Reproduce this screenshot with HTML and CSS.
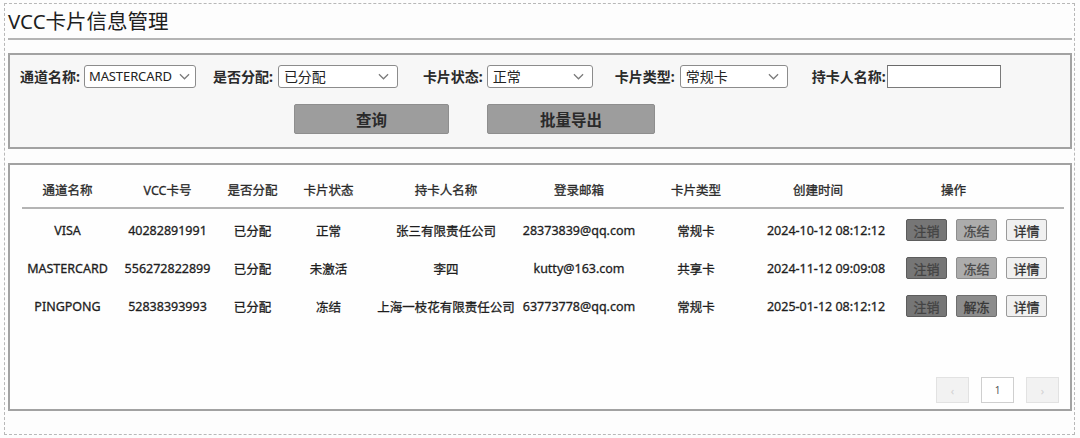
FILE: index.html
```html
<!DOCTYPE html>
<html lang="zh-CN">
<head>
<meta charset="utf-8">
<title>VCC卡片信息管理</title>
<link rel="stylesheet" href="styles.css">
</head>
<body>
<div class="page">
  <h1 class="title">VCC卡片信息管理</h1>

  <section class="search">
    <div class="filters">
      <span class="label">通道名称:</span>
      <div class="select s1"><span>MASTERCARD</span><svg class="chev" viewBox="0 0 12 7"><path d="M1 1l5 5 5-5"/></svg></div>
      <span class="label l2">是否分配:</span>
      <div class="select s2"><span>已分配</span><svg class="chev" viewBox="0 0 12 7"><path d="M1 1l5 5 5-5"/></svg></div>
      <span class="label l3">卡片状态:</span>
      <div class="select s3"><span>正常</span><svg class="chev" viewBox="0 0 12 7"><path d="M1 1l5 5 5-5"/></svg></div>
      <span class="label l4">卡片类型:</span>
      <div class="select s4"><span>常规卡</span><svg class="chev" viewBox="0 0 12 7"><path d="M1 1l5 5 5-5"/></svg></div>
      <span class="label l5">持卡人名称:</span>
      <div class="input"></div>
    </div>
    <div class="actions">
      <button class="btn btn-query">查询</button>
      <button class="btn btn-export">批量导出</button>
    </div>
  </section>

  <section class="list">
    <table class="grid">
      <colgroup>
        <col class="c1"><col class="c2"><col class="c3"><col class="c4"><col class="c5"><col class="c6"><col class="c7"><col class="c8"><col class="c9">
      </colgroup>
      <thead>
        <tr>
          <th>通道名称</th><th>VCC卡号</th><th>是否分配</th><th>卡片状态</th><th>持卡人名称</th><th>登录邮箱</th><th>卡片类型</th><th class="th-date">创建时间</th><th class="th-op">操作</th>
        </tr>
      </thead>
      <tbody>
        <tr>
          <td>VISA</td><td>40282891991</td><td>已分配</td><td>正常</td><td>张三有限责任公司</td><td>28373839@qq.com</td><td>常规卡</td><td class="td-date">2024-10-12 08:12:12</td>
          <td class="ops"><button class="op op-cancel">注销</button><button class="op op-freeze">冻结</button><button class="op op-detail">详情</button></td>
        </tr>
        <tr>
          <td>MASTERCARD</td><td>556272822899</td><td>已分配</td><td>未激活</td><td>李四</td><td>kutty@163.com</td><td>共享卡</td><td class="td-date">2024-11-12 09:09:08</td>
          <td class="ops"><button class="op op-cancel">注销</button><button class="op op-freeze">冻结</button><button class="op op-detail">详情</button></td>
        </tr>
        <tr>
          <td>PINGPONG</td><td>52838393993</td><td>已分配</td><td>冻结</td><td>上海一枝花有限责任公司</td><td>63773778@qq.com</td><td>常规卡</td><td class="td-date">2025-01-12 08:12:12</td>
          <td class="ops"><button class="op op-cancel">注销</button><button class="op op-unfreeze">解冻</button><button class="op op-detail">详情</button></td>
        </tr>
      </tbody>
    </table>

    <div class="pager">
      <span class="pg pg-off">‹</span>
      <span class="pg pg-cur">1</span>
      <span class="pg pg-off">›</span>
    </div>
  </section>
</div>
</body>
</html>
```
FILE: styles.css
```css
* { box-sizing: border-box; }

html, body {
  margin: 0;
  padding: 0;
  background: #fdfdfd;
}

body {
  font-family: "Noto Sans", "Noto Sans CJK SC", sans-serif;
  color: #222;
}

.page {
  margin: 3px 0 0 4px;
  width: 1071px;
  height: 432px;
  border: 1px dashed #b8b8b8;
  padding: 0 2px 0 3px;
  display: flex;
  flex-direction: column;
}

.title {
  margin: 0;
  padding: 3px 0 3px 0;
  font-size: 20.5px;
  line-height: 28px;
  font-weight: 400;
  color: #1e1e1e;
  border-bottom: 2px solid #b4b4b4;
}

/* search panel */
.search {
  margin-top: 13px;
  height: 96px;
  border: 2px solid #a2a2a2;
  background: #f7f7f7;
  padding: 10px 10px 0 10px;
}

.filters {
  display: flex;
  align-items: center;
  height: 22px;
}

.label {
  font-size: 14px;
  font-weight: 700;
  color: #2a2a2a;
  white-space: nowrap;
}

.l2 { margin-left: 17px; }
.l3 { margin-left: 25px; }
.l4 { margin-left: 22px; }
.l5 { margin-left: 24px; }

.select {
  display: flex;
  align-items: center;
  justify-content: space-between;
  height: 23px;
  border: 1px solid #8c8c8c;
  border-radius: 3px;
  background: #fff;
  padding: 0 5px 0 5px;
  font-size: 14px;
  color: #222;
  white-space: nowrap;
}

.s1 { width: 112px; margin-left: 4px; padding: 0 3px 0 4px; }
.s1 span { font-size: 13px; letter-spacing: -0.1px; }
.s2 { width: 120px; margin-left: 5px; }
.s3 { width: 106px; margin-left: 4px; }
.s4 { width: 108px; margin-left: 5px; }

.chev {
  flex: none;
  width: 11px;
  height: 7px;
  margin-left: 1px;
  margin-right: 3px;
  fill: none;
  stroke: #7a7a7a;
  stroke-width: 1.3;
}

.s1 .chev { margin-right: 2px; }

.input {
  width: 114px;
  height: 23px;
  margin-left: 1px;
  border: 1px solid #7a7a7a;
  border-top-color: #6a6a6a;
  background: #fff;
}

.actions {
  display: flex;
  margin-top: 17px;
  padding-left: 274px;
}

.btn {
  height: 30px;
  border: 1px solid #8e8e8e;
  border-radius: 2px;
  background: #9d9d9d;
  font-family: inherit;
  font-size: 15.5px;
  font-weight: 700;
  color: #2a2a2a;
  padding: 0;
}

.btn-query { width: 155px; }
.btn-export { width: 168px; margin-left: 38px; }

/* list panel */
.list {
  margin-top: 14px;
  height: 248px;
  border: 2px solid #a2a2a2;
  background: #fefefe;
  padding: 6px 6px 6px 12px;
  display: flex;
  flex-direction: column;
}

.grid {
  width: 1042px;
  border-collapse: separate;
  border-spacing: 0;
  table-layout: fixed;
  font-size: 12.5px;
  -webkit-text-stroke: 0.3px currentColor;
}

.c1 { width: 91px; }
.c2 { width: 109px; }
.c3 { width: 61px; }
.c4 { width: 91px; }
.c5 { width: 144px; }
.c6 { width: 122px; }
.c7 { width: 112px; }
.c8 { width: 140px; }
.c9 { width: 172px; }

.grid th {
  height: 38px;
  padding: 0;
  font-weight: 400;
  color: #2a2a2a;
  text-align: center;
  vertical-align: middle;
  border-bottom: 2px solid #b4b4b4;
  white-space: nowrap;
}

.grid th.th-date { padding-right: 8px; }

.grid th.th-op {
  text-align: left;
  padding-left: 49px;
}

.grid td {
  height: 38px;
  padding: 0;
  text-align: center;
  vertical-align: middle;
  font-weight: 400;
  color: #1e1e1e;
  white-space: nowrap;
}

.grid td.td-date { padding-left: 8px; }

.grid tbody tr:first-child td {
  height: 40px;
  padding-top: 2px;
}

.grid td.ops {
  text-align: left;
  padding-left: 14px;
  font-size: 0;
}

.op {
  width: 41px;
  height: 22px;
  padding: 0;
  margin-right: 9px;
  border: 1px solid #8a8a8a;
  border-radius: 2px;
  font-family: inherit;
  font-size: 13px;
  font-weight: 400;
  vertical-align: middle;
}

.op-cancel { background: #767676; border-color: #5c5c5c; color: #444; }
.op-freeze { background: #acacac; border-color: #8e8e8e; color: #4a4a4a; }
.op-unfreeze { background: #8c8c8c; border-color: #6e6e6e; color: #383838; }
.op-detail { background: #f0f0f0; border-color: #9a9a9a; color: #333; }

.pager {
  margin-top: auto;
  align-self: flex-end;
  margin-right: 5px;
  display: flex;
  gap: 12px;
  -webkit-text-stroke: 0;
}

.pg {
  width: 33px;
  height: 26px;
  display: flex;
  align-items: center;
  justify-content: center;
  font-size: 10px;
  border: 1px solid #e2e2e2;
}

.pg-off {
  background: #f2f2f2;
  color: #d0d0d0;
  font-size: 11px;
}

.pg-cur {
  background: #fff;
  border-color: #cfcfcf;
  color: #555;
}
```
